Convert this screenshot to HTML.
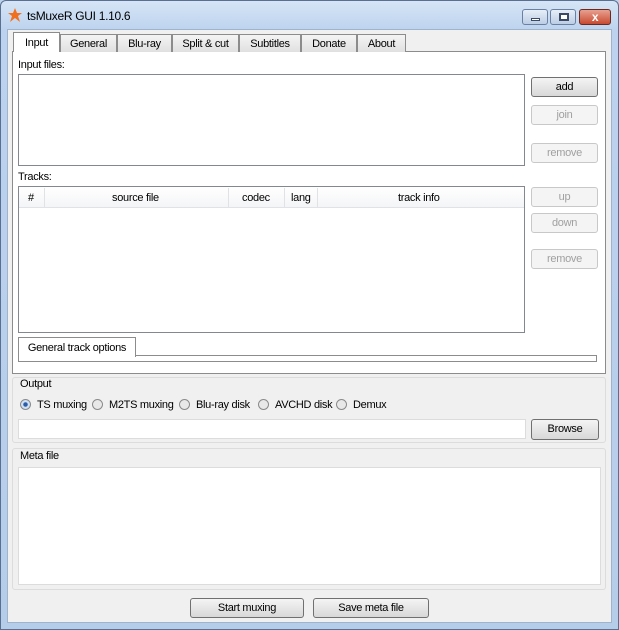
<!DOCTYPE html>
<html><head><meta charset="utf-8"><style>
*{box-sizing:border-box;margin:0;padding:0}
body{width:619px;height:630px;background:#bcd3ee;font-family:"Liberation Sans",sans-serif;font-size:11px;letter-spacing:-0.3px;color:#000;position:relative;overflow:hidden}
.a{position:absolute}
.frame{left:0;top:0;width:619px;height:630px;background:linear-gradient(#d6e5f6,#bcd2ee 30px,#b6cdea);border:1px solid #5a7090;border-radius:6px 6px 0 0}
.client{left:7px;top:29px;width:605px;height:594px;background:#f0f0f0;border:1px solid #9fb3cc}
.box{background:#fff;border:1px solid #a0a0a0}
.btn{background:linear-gradient(#f4f4f4,#e6e6e6 50%,#d8d8d8);border:1px solid #707070;border-radius:3px;text-align:center;line-height:19px}
.dis{background:#f4f4f4;border:1px solid #c8c8c8;color:#a0a0a0;border-radius:3px;text-align:center;line-height:18px}
.tab{top:34px;height:18px;border:1px solid #8c8c8c;border-bottom:none;background:linear-gradient(#f4f4f4,#e0e0e0);text-align:center;line-height:18px}
.radio{width:11px;height:11px;border-radius:50%;border:1px solid #8a8a8a;background:#e8e8e8;top:399px}
</style></head><body>
<div class="a frame"></div>
<svg class="a" style="left:7px;top:7px" width="16" height="16" viewBox="0 0 16 16"><path d="M8 1 L10 6 L15 6 L11 9 L13 15 L8 11 L3 15 L5 9 L1 6 L6 6Z" fill="#f07020"/></svg>
<div class="a" style="left:27px;top:9px;font-size:12px">tsMuxeR GUI 1.10.6</div>
<div class="a" style="left:522px;top:9px;width:26px;height:16px;border:1px solid #6a80a0;border-radius:3px;background:linear-gradient(#e6eef8,#bccde4)"><div class="a" style="left:8px;top:8px;width:9px;height:3px;background:#fff;border:1px solid #3a4a66"></div></div>
<div class="a" style="left:550px;top:9px;width:26px;height:16px;border:1px solid #6a80a0;border-radius:3px;background:linear-gradient(#e6eef8,#bccde4)"><div class="a" style="left:8px;top:3px;width:10px;height:8px;border:2px solid #3a4a66;background:#fff"></div></div>
<div class="a" style="left:579px;top:9px;width:32px;height:16px;border:1px solid #6a2a20;border-radius:3px;background:linear-gradient(#e8a090,#c84a30);color:#fff;font-weight:bold;text-align:center;line-height:15px;font-size:12px">x</div>
<div class="a client"></div>
<div class="a" style="left:12px;top:51px;width:594px;height:323px;background:#fff;border:1px solid #8c8c8c"></div>
<div class="a tab" style="left:13px;top:32px;height:20px;width:47px;background:#fff;border-color:#8c8c8c;z-index:2;line-height:21px">Input</div>
<div class="a tab" style="left:60px;width:57px">General</div>
<div class="a tab" style="left:117px;width:55px">Blu-ray</div>
<div class="a tab" style="left:172px;width:67px">Split &amp; cut</div>
<div class="a tab" style="left:239px;width:62px">Subtitles</div>
<div class="a tab" style="left:301px;width:56px">Donate</div>
<div class="a tab" style="left:357px;width:49px">About</div>
<div class="a" style="left:18px;top:59px">Input files:</div>
<div class="a box" style="left:18px;top:74px;width:507px;height:92px;border-color:#828790"></div>
<div class="a btn" style="left:531px;top:77px;width:67px;height:20px">add</div>
<div class="a dis" style="left:531px;top:105px;width:67px;height:20px">join</div>
<div class="a dis" style="left:531px;top:143px;width:67px;height:20px">remove</div>
<div class="a" style="left:18px;top:171px">Tracks:</div>
<div class="a box" style="left:18px;top:186px;width:507px;height:147px;border-color:#828790"></div>
<div class="a" style="left:19px;top:187px;width:505px;height:21px;background:linear-gradient(#fff,#f4f5f7);border-bottom:1px solid #e0e2e6"></div>
<div class="a" style="left:28px;top:192px">#</div>
<div class="a" style="left:44px;top:188px;width:1px;height:19px;background:#e0e2e6"></div>
<div class="a" style="left:112px;top:192px">source file</div>
<div class="a" style="left:228px;top:188px;width:1px;height:19px;background:#e0e2e6"></div>
<div class="a" style="left:242px;top:192px">codec</div>
<div class="a" style="left:284px;top:188px;width:1px;height:19px;background:#e0e2e6"></div>
<div class="a" style="left:291px;top:192px">lang</div>
<div class="a" style="left:317px;top:188px;width:1px;height:19px;background:#e0e2e6"></div>
<div class="a" style="left:398px;top:192px">track info</div>
<div class="a dis" style="left:531px;top:187px;width:67px;height:20px">up</div>
<div class="a dis" style="left:531px;top:213px;width:67px;height:20px">down</div>
<div class="a dis" style="left:531px;top:249px;width:67px;height:20px">remove</div>
<div class="a" style="left:18px;top:355px;width:579px;height:7px;border:1px solid #8c8c8c"></div>
<div class="a" style="left:18px;top:337px;width:118px;height:20px;background:#fff;border:1px solid #8c8c8c;border-bottom:none;text-align:center;line-height:20px">General track options</div>
<div class="a" style="left:12px;top:377px;width:594px;height:66px;border:1px solid #dcdcdc;border-radius:3px"></div>
<div class="a" style="left:20px;top:378px">Output</div>
<div class="a radio" style="left:20px;background:radial-gradient(#2a5ca8 30%,#cfe0f4 40%)"></div>
<div class="a" style="left:37px;top:399px">TS muxing</div>
<div class="a radio" style="left:92px"></div><div class="a" style="left:109px;top:399px">M2TS muxing</div>
<div class="a radio" style="left:179px"></div><div class="a" style="left:196px;top:399px">Blu-ray disk</div>
<div class="a radio" style="left:258px"></div><div class="a" style="left:275px;top:399px">AVCHD disk</div>
<div class="a radio" style="left:336px"></div><div class="a" style="left:353px;top:399px">Demux</div>
<div class="a box" style="left:18px;top:419px;width:508px;height:20px;border-color:#dcdcdc"></div>
<div class="a btn" style="left:531px;top:419px;width:68px;height:21px">Browse</div>
<div class="a" style="left:12px;top:448px;width:594px;height:142px;border:1px solid #dcdcdc;border-radius:3px"></div>
<div class="a" style="left:20px;top:450px">Meta file</div>
<div class="a box" style="left:18px;top:467px;width:583px;height:118px;border-color:#dcdcdc"></div>
<div class="a btn" style="left:190px;top:598px;width:114px;height:20px">Start muxing</div>
<div class="a btn" style="left:313px;top:598px;width:116px;height:20px">Save meta file</div>
</body></html>
